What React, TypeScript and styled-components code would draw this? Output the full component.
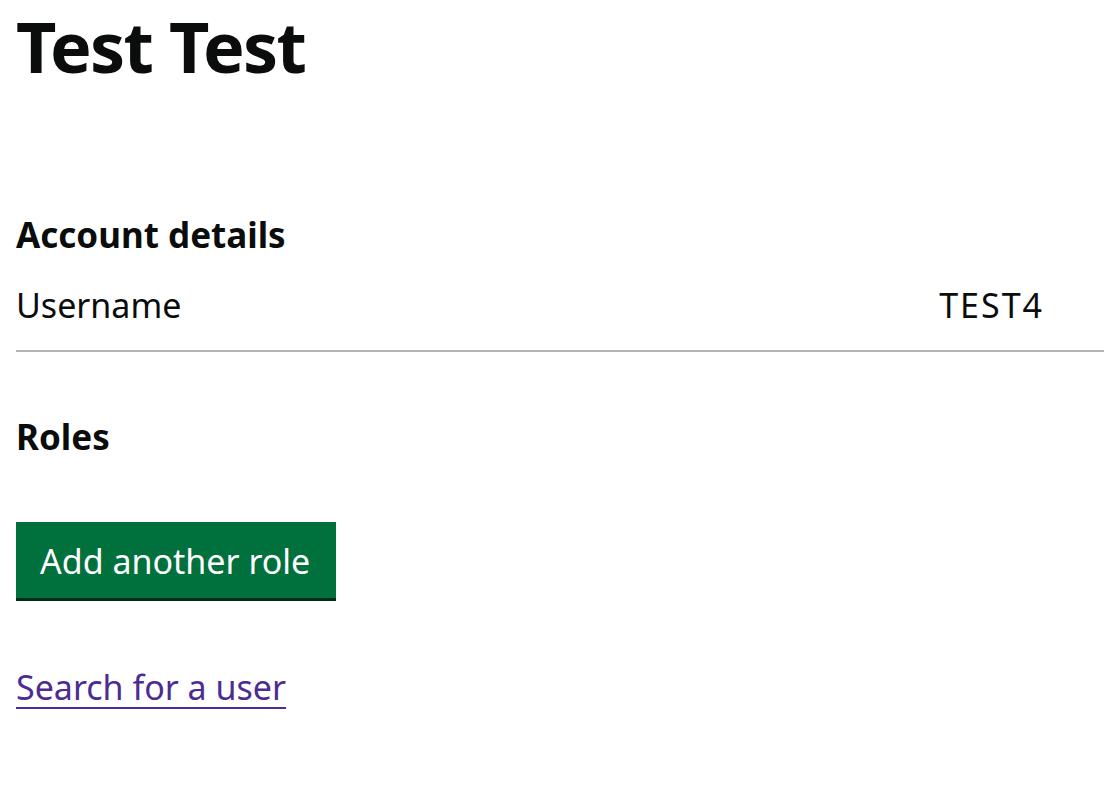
import React from "react";
import styled, { createGlobalStyle } from "styled-components";

const GlobalStyle = createGlobalStyle`
  html, body { margin: 0; padding: 0; background: #ffffff; }
  body {
    font-family: "Noto Sans", "Open Sans", Arial, sans-serif;
    color: #0b0c0c;
    -webkit-font-smoothing: antialiased;
  }
`;

const Page = styled.main`
  padding: 9px 0 40px 16px;
`;

const Title = styled.h1`
  margin: 0 0 131px;
  font-size: 70px;
  line-height: 75px;
  font-weight: 700;
  letter-spacing: -1.6px;
`;

const SectionHeading = styled.h2<{ $gap: number }>`
  margin: 0 0 ${(p) => p.$gap}px;
  font-size: 35px;
  line-height: 40px;
  font-weight: 700;
`;

const SummaryList = styled.dl`
  margin: 0 0 65px;
`;

const SummaryRow = styled.div`
  display: flex;
  justify-content: space-between;
  align-items: baseline;
  padding: 10px 60px 25px 0;
  border-bottom: 2px solid #b1b4b6;
`;

const Key = styled.dt`
  margin: 0;
  font-size: 34px;
  line-height: 40px;
  font-weight: 400;
`;

const Value = styled.dd`
  margin: 0;
  font-size: 34px;
  line-height: 40px;
  letter-spacing: 2px;
`;

const Button = styled.button`
  display: inline-block;
  margin: 0 0 69px;
  padding: 19px 26px 17px 24px;
  border: 0;
  border-radius: 0;
  background: #00703c;
  box-shadow: 0 3px 0 #002d18;
  color: #ffffff;
  font-family: inherit;
  font-size: 34px;
  line-height: 40px;
  font-weight: 400;
  cursor: pointer;
`;

const ButtonBlock = styled.div`
  display: block;
`;

const Link = styled.a`
  font-size: 34px;
  line-height: 40px;
  color: #4c2c92;
  text-decoration: underline;
  text-decoration-thickness: 2px;
  text-underline-offset: 7px;
`;

export default function App() {
  return (
    <>
      <GlobalStyle />
      <Page>
        <Title>Test Test</Title>
        <SectionHeading $gap={20}>Account details</SectionHeading>
        <SummaryList>
          <SummaryRow>
            <Key>Username</Key>
            <Value>TEST4</Value>
          </SummaryRow>
        </SummaryList>
        <SectionHeading $gap={65}>Roles</SectionHeading>
        <ButtonBlock>
          <Button type="button">Add another role</Button>
        </ButtonBlock>
        <Link href="#">Search for a user</Link>
      </Page>
    </>
  );
}
